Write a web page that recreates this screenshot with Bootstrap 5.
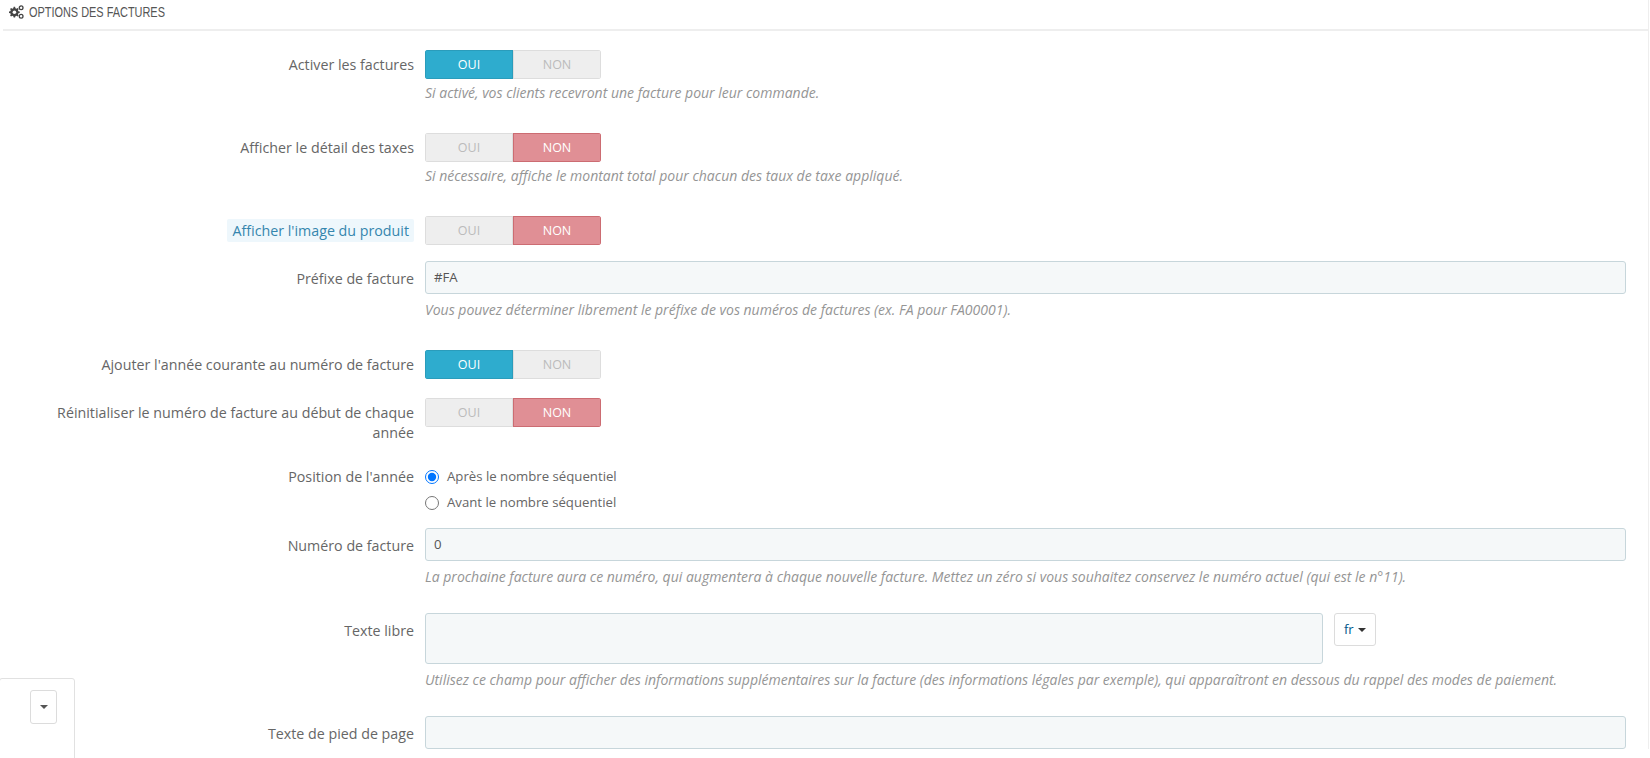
<!DOCTYPE html>
<html lang="fr">
<head>
<meta charset="utf-8">
<title>Options des factures</title>
<link href="https://cdn.jsdelivr.net/npm/bootstrap@5.3.0/dist/css/bootstrap.min.css" rel="stylesheet">
<style>
html,body{height:758px;overflow:hidden;background:#fff}
body{font-family:"Open Sans","Noto Sans",sans-serif;font-size:14px;color:#666;position:relative}
.sheet{margin:0 1px 0 3px;border-right:1px solid #eee}
.sheet-head{height:31px;border-bottom:2px solid #eee;padding:0 0 6px 5px;color:#555;margin-bottom:19px;gap:5px}
.head-text{display:inline-block;font-family:"Liberation Sans",sans-serif;font-size:14px;line-height:20px;text-transform:uppercase;transform:scaleX(.78);transform-origin:left center;white-space:nowrap}
.opt-row{display:flex}
.opt-label{width:411px;flex:none;text-align:right;color:#666;padding-left:29px;line-height:20px;font-size:14.25px}
.lab-sw{padding-top:5px}.lab-fld{padding-top:8px}.lab-rd{padding-top:3px}
.opt-label .hl{background:#eef7fc;color:#3586ae;padding:2px 5px;border-radius:2px}
.opt-field{flex:1;margin-left:11px;min-width:0;margin-right:22px}
.sw{display:flex;width:176px;height:29px;border-radius:3px;font-weight:500;font-size:12.5px;line-height:27px;text-align:center;overflow:hidden}
.sw>div{flex:1;border:1px solid #ddd;background:#eee;color:#bbb}
.sw>div.sw-on{background:#2eacce;border-color:#2a9cbb;color:#fff}
.sw>div.sw-off{background:#e08f95;border-color:#cc6c72;color:#fff}
.hint{font-style:italic;color:#959595;font-size:14px;line-height:20px;margin-top:4px;white-space:nowrap}
.fld{height:33px;width:100%;background:#f5f8f9;border:1px solid #c7d6db;border-radius:3px;padding:0 8px;font-size:13.2px;line-height:31px;color:#555}
.fld-wrap+.hint,.fld+.hint{margin-top:6px}
.fld-area{height:51px;flex:1;width:auto}
.lang-btn{width:42px;height:33px;background:#fff;border:1px solid #dcdcdc;border-radius:3px;margin:0 250px 0 11px;color:#00578a;line-height:31px;text-align:center;flex:none;font-size:13px}
.caret-down{display:inline-block;width:0;height:0;border-left:4px solid transparent;border-right:4px solid transparent;border-top:4px solid #333;vertical-align:2px;margin-left:1px}
.rd{display:flex;align-items:center;gap:8px;height:26px;color:#666;font-size:13.2px}
.rd input{width:14px;height:14px;margin:0;flex:none;accent-color:#0075ff}
.side-box{position:absolute;left:-1px;top:678px;width:76px;height:90px;background:#fff;border:1px solid #e1e1e1;border-radius:3px}
.side-btn{position:absolute;left:30px;top:11px;width:27px;height:34px;border:1px solid #dcdcdc;border-radius:3px;background:#fff;display:flex;align-items:center;justify-content:center}
.side-btn .caret-down{margin:0;vertical-align:0;border-top-color:#555}
.gap-30{margin-bottom:30px}.gap-26{margin-bottom:26px}.gap-16{margin-bottom:16px}.gap-19{margin-bottom:19px}.gap-12{margin-bottom:12px}.gap-21{margin-bottom:21px}
</style>
</head>
<body>
<div class="sheet">
  <div class="sheet-head d-flex align-items-center">
    <svg width="16" height="14" viewBox="0 0 17 15" fill="#444"><path d="M6 2l1.5 0 .4 1.4 1.1.5 1.3-.7 1 1-.7 1.3.5 1.1 1.4.4v1.5l-1.4.4-.5 1.1.7 1.3-1 1-1.3-.7-1.1.5-.4 1.4H6l-.4-1.4-1.1-.5-1.3.7-1-1 .7-1.3-.5-1.1L1 8.5V7l1.4-.4.5-1.1-.7-1.3 1-1 1.3.7 1.1-.5z"/><circle cx="6.8" cy="7.8" r="1.9" fill="#fff"/><circle cx="14" cy="3" r="2" fill="none" stroke="#444" stroke-width="1.4"/><circle cx="14" cy="12" r="2" fill="none" stroke="#444" stroke-width="1.4"/></svg>
    <span class="head-text">Options des factures</span>
  </div>

  <div class="opt-row gap-30"><div class="opt-label lab-sw">Activer les factures</div><div class="opt-field"><div class="sw"><div class="sw-on">OUI</div><div>NON</div></div><div class="hint">Si activé, vos clients recevront une facture pour leur commande.</div></div></div>
  <div class="opt-row gap-30"><div class="opt-label lab-sw">Afficher le détail des taxes</div><div class="opt-field"><div class="sw"><div>OUI</div><div class="sw-off">NON</div></div><div class="hint">Si nécessaire, affiche le montant total pour chacun des taux de taxe appliqué.</div></div></div>
  <div class="opt-row gap-16"><div class="opt-label lab-sw"><span class="hl">Afficher l'image du produit</span></div><div class="opt-field"><div class="sw"><div>OUI</div><div class="sw-off">NON</div></div></div></div>
  <div class="opt-row gap-30"><div class="opt-label lab-fld">Préfixe de facture</div><div class="opt-field"><div class="fld">#FA</div><div class="hint">Vous pouvez déterminer librement le préfixe de vos numéros de factures (ex. FA pour FA00001).</div></div></div>
  <div class="opt-row gap-19"><div class="opt-label lab-sw">Ajouter l'année courante au numéro de facture</div><div class="opt-field"><div class="sw"><div class="sw-on">OUI</div><div>NON</div></div></div></div>
  <div class="opt-row gap-21"><div class="opt-label lab-sw">Réinitialiser le numéro de facture au début de chaque année</div><div class="opt-field"><div class="sw"><div>OUI</div><div class="sw-off">NON</div></div></div></div>
  <div class="opt-row gap-12"><div class="opt-label lab-rd">Position de l'année</div><div class="opt-field">
    <label class="rd"><input type="radio" name="pos" checked>Après le nombre séquentiel</label>
    <label class="rd"><input type="radio" name="pos">Avant le nombre séquentiel</label>
  </div></div>
  <div class="opt-row gap-26"><div class="opt-label lab-fld">Numéro de facture</div><div class="opt-field"><div class="fld">0</div><div class="hint">La prochaine facture aura ce numéro, qui augmentera à chaque nouvelle facture. Mettez un zéro si vous souhaitez conservez le numéro actuel (qui est le n°11).</div></div></div>
  <div class="opt-row gap-26"><div class="opt-label lab-fld">Texte libre</div><div class="opt-field"><div class="d-flex align-items-start fld-wrap"><div class="fld fld-area"></div><div class="lang-btn">fr <span class="caret-down"></span></div></div><div class="hint">Utilisez ce champ pour afficher des informations supplémentaires sur la facture (des informations légales par exemple), qui apparaîtront en dessous du rappel des modes de paiement.</div></div></div>
  <div class="opt-row"><div class="opt-label lab-fld">Texte de pied de page</div><div class="opt-field"><div class="fld"></div></div></div>
</div>
<div class="side-box"><div class="side-btn"><span class="caret-down"></span></div></div>
<script src="https://cdn.jsdelivr.net/npm/bootstrap@5.3.0/dist/js/bootstrap.bundle.min.js"></script>
</body>
</html>
